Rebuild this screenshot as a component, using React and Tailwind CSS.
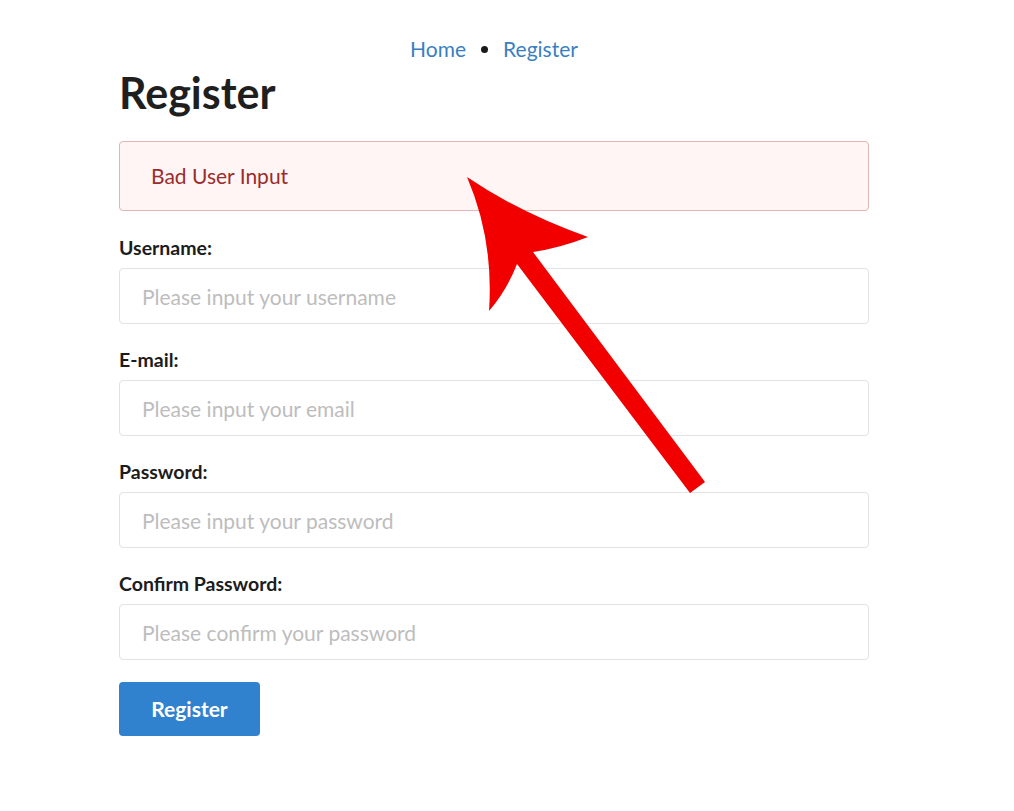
import React from "react";

const fields = [
  { label: "Username:", placeholder: "Please input your username", type: "text" },
  { label: "E-mail:", placeholder: "Please input your email", type: "email" },
  { label: "Password:", placeholder: "Please input your password", type: "password" },
  { label: "Confirm Password:", placeholder: "Please confirm your password", type: "password" },
];

// Seta vermelha de anotação sobre a tela
function RedArrow() {
  return (
    <svg
      className="absolute left-0 top-0 pointer-events-none"
      width="1014"
      height="811"
      viewBox="0 0 1014 811"
    >
      <path
        d="M467 177 Q520 213 588 237 Q560 248 533 252 L705 482 L690 493 L517 264 Q507 290 489 311 Q494 240 467 177 Z"
        fill="#f20000"
      />
    </svg>
  );
}

export default function App() {
  return (
    <div className="relative min-h-[811px] bg-white" style={{ fontFamily: "Lato, 'Open Sans', sans-serif" }}>
      <div className="ml-[119px] w-[750px] pt-[35px]">
        {/* NAV */}
        <nav className="flex justify-center items-center gap-[15px] text-[21px] leading-7 text-[#3a7fc0]">
          <a href="#">Home</a>
          <span className="w-[7px] h-[7px] rounded-full bg-[#1a1a1a]" />
          <a href="#">Register</a>
        </nav>

        <h1 className="mt-[4px] text-[43px] leading-[52px] font-bold text-[#1f1f1f]">Register</h1>

        {/* ALERTA */}
        <div className="mt-[22px] h-[70px] flex items-center pl-[31px] bg-[#fff5f5] border border-[#e3b5b5] rounded-[4px] text-[21px] text-[#9b2c2c]">
          Bad User Input
        </div>

        <form className="mt-[25px] flex flex-col gap-[24px]">
          {fields.map((f) => (
            <div key={f.label} className="flex flex-col">
              <label className="text-[19.5px] leading-6 font-bold text-[#1c1c1c] mb-[8px]">{f.label}</label>
              <input
                type={f.type}
                placeholder={f.placeholder}
                className="h-[56px] px-[22px] border border-[#e2e2e2] rounded-[4px] text-[21px] placeholder:text-[#bdbdbd] outline-none"
              />
            </div>
          ))}
          <button
            type="button"
            className="-mt-[2px] w-[141px] h-[54px] bg-[#3182ce] text-white text-[21px] font-bold rounded-[4px]"
          >
            Register
          </button>
        </form>
      </div>
      <RedArrow />
    </div>
  );
}
